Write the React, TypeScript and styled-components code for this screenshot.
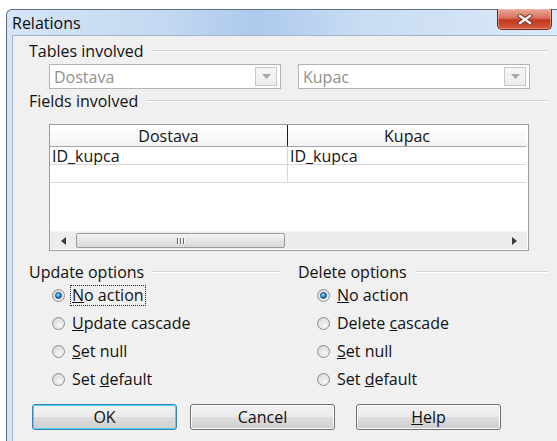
import styled, { createGlobalStyle } from 'styled-components'

const GlobalStyle = createGlobalStyle`
  html, body {
    margin: 0;
    padding: 0;
    background: #ffffff;
  }
  body {
    font-family: 'Open Sans', 'Noto Sans', sans-serif;
    color: #111111;
  }
`

const Screen = styled.div`
  width: 557px;
  height: 441px;
  box-sizing: border-box;
  padding: 9px 0 0 6px;
  overflow: hidden;
`

const Window = styled.div`
  height: 100%;
  box-sizing: border-box;
  display: flex;
  flex-direction: column;
  padding-left: 5px;
  border-top: 1px solid #5d6e86;
  border-left: 1px solid #5d6e86;
  border-top-left-radius: 6px;
  background: linear-gradient(90deg, #d6e5f7 0%, #c2d7f0 30%, #adc9ec 45%, #c9dcf3 65%, #dce9f7 100%);
`

const TitleBar = styled.div`
  height: 25px;
  display: flex;
  justify-content: space-between;
  align-items: flex-start;
  padding-right: 5px;
`

const Title = styled.span`
  font-size: 16px;
  line-height: 25px;
  color: #0b0b0b;
  margin-top: 1px;
`

const CloseButton = styled.div`
  width: 55px;
  height: 21px;
  margin-top: -1px;
  box-sizing: border-box;
  display: flex;
  align-items: center;
  justify-content: center;
  border: 1px solid #6f2a20;
  border-top: none;
  border-radius: 0 0 5px 5px;
  background: linear-gradient(180deg, #e9a898 0%, #d8705c 45%, #c1391f 55%, #d45a3d 100%);
  box-shadow: inset 0 0 0 1px rgba(255, 200, 190, 0.45);
`

const Content = styled.div`
  flex: 1;
  display: flex;
  flex-direction: column;
  box-sizing: border-box;
  background: #f0f0f0;
  border-top: 1px solid #9fb4cf;
  border-left: 1px solid #9fb4cf;
  padding: 6px 9px 0 16px;
  font-size: 16px;
`

const GroupHeader = styled.div<{ $top?: number }>`
  display: flex;
  align-items: center;
  gap: 8px;
  height: 18px;
  line-height: 18px;
  margin-top: ${p => p.$top ?? 0}px;
  color: #111111;
`

const Rule = styled.div`
  flex: 1;
  height: 1px;
  background: #d4d4d4;
  border-bottom: 1px solid #ffffff;
`

const ComboRow = styled.div`
  display: flex;
  gap: 17px;
  margin: 4px 0 0 20px;
`

const Combo = styled.div<{ $width: number }>`
  width: ${p => p.$width}px;
  height: 25px;
  box-sizing: border-box;
  display: flex;
  align-items: center;
  justify-content: space-between;
  padding: 2px 3px 2px 4px;
  background: #ffffff;
  border: 1px solid #b1b4b7;
  color: #8f8f8f;
`

const ComboArrow = styled.div`
  width: 22px;
  height: 19px;
  box-sizing: border-box;
  display: flex;
  align-items: center;
  justify-content: center;
  border: 1px solid #c9c9c9;
  background: linear-gradient(180deg, #f7f7f7, #ececec);
`

const Grid = styled.div`
  width: 480px;
  height: 127px;
  box-sizing: border-box;
  margin: 14px 0 0 20px;
  display: flex;
  flex-direction: column;
  background: #ffffff;
  border: 1px solid #9c9c9c;
`

const GridRow = styled.div<{ $head?: boolean }>`
  display: grid;
  grid-template-columns: 238px 1fr;
  height: ${p => (p.$head ? 21 : 17)}px;
  margin-right: 2px;
  border-bottom: 1px solid ${p => (p.$head ? '#a5a5a5' : '#d8d8d8')};
  background: ${p => (p.$head ? 'linear-gradient(180deg, #ffffff, #f4f4f4)' : '#ffffff')};
`

const GridCell = styled.div<{ $head?: boolean; $last?: boolean }>`
  display: flex;
  align-items: center;
  justify-content: ${p => (p.$head ? 'center' : 'flex-start')};
  padding-left: ${p => (p.$head ? 0 : 2)}px;
  border-right: ${p => (p.$last ? 'none' : `1px solid ${p.$head ? '#1a1a1a' : '#d8d8d8'}`)};
  color: #141414;
  line-height: 1;
`

const GridFill = styled.div`
  flex: 1;
`

const HScroll = styled.div`
  height: 17px;
  margin: 0 1px 1px 0;
  display: flex;
  align-items: center;
  background: #ececec;
  border-top: 1px solid #f4f4f4;
`

const ScrollArrow = styled.div`
  width: 26px;
  height: 100%;
  display: flex;
  align-items: center;
  justify-content: center;
`

const Thumb = styled.div`
  width: 209px;
  height: 15px;
  box-sizing: border-box;
  display: flex;
  align-items: center;
  justify-content: center;
  gap: 1px;
  border: 1px solid #9a9a9a;
  border-radius: 2px;
  background: linear-gradient(180deg, #f4f4f4 0%, #e6e6e6 50%, #d8d8d8 100%);
`

const Grip = styled.span`
  width: 1px;
  height: 6px;
  background: #6a6a6a;
  border-right: 1px solid #fafafa;
`

const Track = styled.div`
  flex: 1;
`

const Options = styled.div`
  display: grid;
  grid-template-columns: 251px 1fr;
  column-gap: 18px;
  margin-top: 12px;
`

const OptionColumn = styled.div`
  display: flex;
  flex-direction: column;
`

const RadioRow = styled.div<{ $indent: number }>`
  height: 28px;
  display: flex;
  align-items: center;
  gap: 5px;
  padding-left: ${p => p.$indent}px;
  color: #111111;
`

const RadioMark = styled.span<{ $checked?: boolean }>`
  width: 13px;
  height: 13px;
  box-sizing: border-box;
  border-radius: 50%;
  border: 1px solid #8c8f93;
  background: radial-gradient(circle at 60% 65%, #f8f8f8 0%, #e2e2e2 55%, #cfcfcf 100%);
  display: flex;
  align-items: center;
  justify-content: center;
  margin-right: 1px;

  &::after {
    content: '';
    display: ${p => (p.$checked ? 'block' : 'none')};
    width: 7px;
    height: 7px;
    box-sizing: border-box;
    border-radius: 50%;
    border: 1px solid #16467a;
    background: radial-gradient(circle at 40% 35%, #9fe2fb 0%, #2b8bd0 50%, #0b4f8f 100%);
  }
`

const RadioLabel = styled.span<{ $focused?: boolean }>`
  padding: 0 1px;
  line-height: 19px;
  outline: ${p => (p.$focused ? '1px dotted #222222' : 'none')};
`

const ButtonRow = styled.div`
  display: flex;
  margin: 11px 0 0 3px;
`

const Button = styled.div<{ $default?: boolean; $gap?: number }>`
  width: 145px;
  height: 26px;
  box-sizing: border-box;
  margin-right: ${p => p.$gap ?? 0}px;
  display: flex;
  align-items: center;
  justify-content: center;
  border: 1px solid ${p => (p.$default ? '#3c7fb1' : '#707070')};
  border-radius: 3px;
  color: #111111;
  background: linear-gradient(180deg, #f2f2f2 0%, #ebebeb 48%, #dddddd 52%, #cfcfcf 100%);
  box-shadow: ${p => (p.$default ? 'inset 0 0 0 1px #48d8fc' : 'inset 0 0 0 1px #fcfcfc')};
`

type Choice = { label: React.ReactNode; checked?: boolean; focused?: boolean }

const updateChoices: Choice[] = [
  { label: <><u>N</u>o action</>, checked: true, focused: true },
  { label: <><u>U</u>pdate cascade</> },
  { label: <><u>S</u>et null</> },
  { label: <>Set <u>d</u>efault</> },
]

const deleteChoices: Choice[] = [
  { label: <><u>N</u>o action</>, checked: true },
  { label: <>Delete <u>c</u>ascade</> },
  { label: <><u>S</u>et null</> },
  { label: <>Set <u>d</u>efault</> },
]

function DownTriangle() {
  return (
    <svg width="9" height="5" viewBox="0 0 9 5">
      <path d="M0 0 H9 L4.5 5 Z" fill="#a8a8a8" />
    </svg>
  )
}

function CloseGlyph() {
  return (
    <svg width="16" height="11" viewBox="0 0 16 11">
      <path d="M3 2 L13 9 M13 2 L3 9" stroke="#6b3128" strokeWidth="4.2" strokeLinecap="square" />
      <path d="M3 2 L13 9 M13 2 L3 9" stroke="#f4f4f4" strokeWidth="2.4" strokeLinecap="square" />
    </svg>
  )
}

function ArrowGlyph({ dir }: { dir: 'left' | 'right' }) {
  return (
    <svg width="5" height="8" viewBox="0 0 5 8">
      <path d={dir === 'left' ? 'M5 0 V8 L0 4 Z' : 'M0 0 V8 L5 4 Z'} fill="#3a3a3a" />
    </svg>
  )
}

function OptionGroup({ title, choices, indent }: { title: string; choices: Choice[]; indent: number }) {
  return (
    <OptionColumn>
      <GroupHeader>
        {title}
        <Rule />
      </GroupHeader>
      {choices.map((c, i) => (
        <RadioRow key={i} $indent={indent}>
          <RadioMark $checked={c.checked} />
          <RadioLabel $focused={c.focused}>{c.label}</RadioLabel>
        </RadioRow>
      ))}
    </OptionColumn>
  )
}

export default function App() {
  return (
    <Screen>
      <GlobalStyle />
      <Window>
        <TitleBar>
          <Title>Relations</Title>
          <CloseButton>
            <CloseGlyph />
          </CloseButton>
        </TitleBar>
        <Content>
          <GroupHeader>
            Tables involved
            <Rule />
          </GroupHeader>
          <ComboRow>
            <Combo $width={232}>
              Dostava
              <ComboArrow><DownTriangle /></ComboArrow>
            </Combo>
            <Combo $width={232}>
              Kupac
              <ComboArrow><DownTriangle /></ComboArrow>
            </Combo>
          </ComboRow>
          <GroupHeader $top={3}>
            Fields involved
            <Rule />
          </GroupHeader>
          <Grid>
            <GridRow $head>
              <GridCell $head>Dostava</GridCell>
              <GridCell $head $last>Kupac</GridCell>
            </GridRow>
            <GridRow>
              <GridCell>ID_kupca</GridCell>
              <GridCell $last>ID_kupca</GridCell>
            </GridRow>
            <GridRow>
              <GridCell />
              <GridCell $last />
            </GridRow>
            <GridFill />
            <HScroll>
              <ScrollArrow><ArrowGlyph dir="left" /></ScrollArrow>
              <Thumb>
                <Grip />
                <Grip />
                <Grip />
              </Thumb>
              <Track />
              <ScrollArrow><ArrowGlyph dir="right" /></ScrollArrow>
            </HScroll>
          </Grid>
          <Options>
            <OptionGroup title="Update options" choices={updateChoices} indent={23} />
            <OptionGroup title="Delete options" choices={deleteChoices} indent={19} />
          </Options>
          <ButtonRow>
            <Button $default $gap={13}>OK</Button>
            <Button $gap={21}>Cancel</Button>
            <Button><u>H</u>elp</Button>
          </ButtonRow>
        </Content>
      </Window>
    </Screen>
  )
}
